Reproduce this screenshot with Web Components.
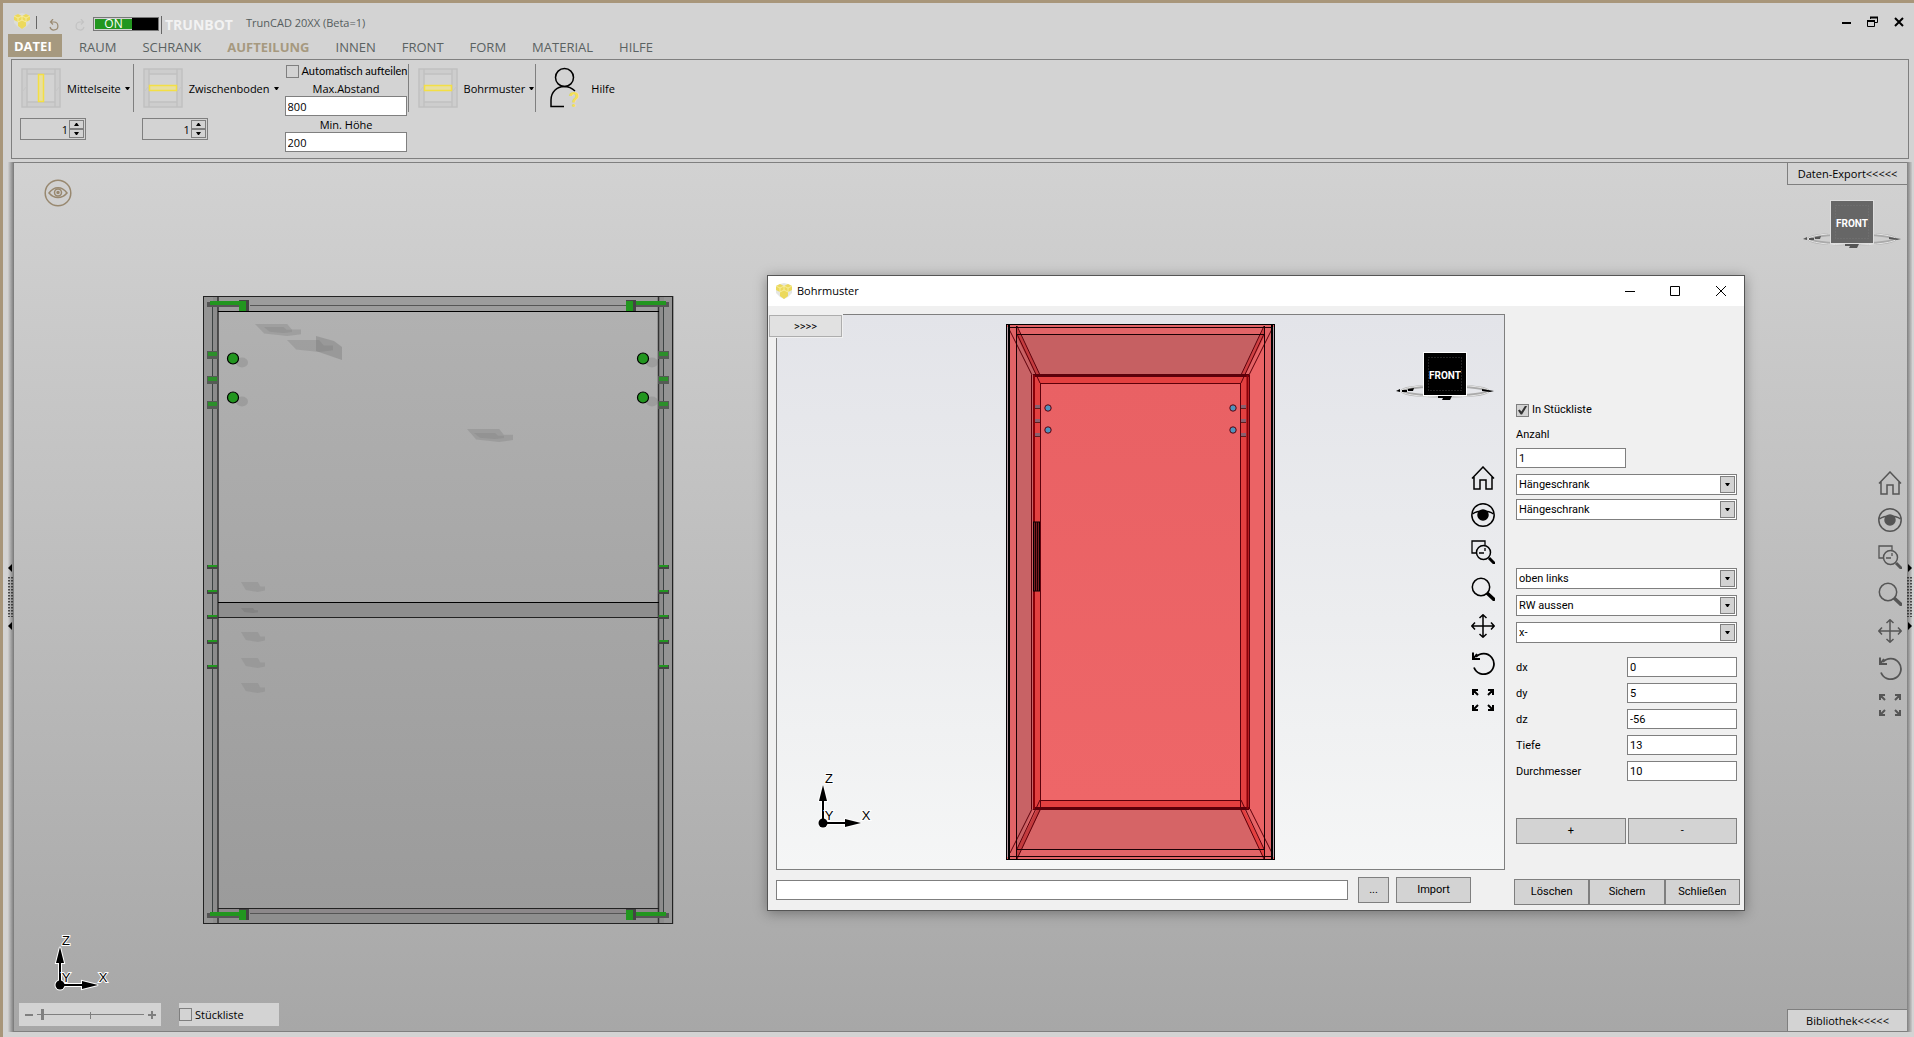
<!DOCTYPE html>
<html lang="de">
<head>
<meta charset="utf-8">
<title>TrunCAD 20XX</title>
<style>
html, body { margin: 0; height: 100%; }
body { font-family: "Open Sans", "Noto Sans", sans-serif; font-size: 11px; color: #000; background: #d3d3d3; overflow: hidden; --line: #7f7f7f; --face: #d3d3d3; }
</style>
</head>
<body>
<tc-app></tc-app>
<script>
const BASE = `*{box-sizing:border-box}button,input,select{font:inherit;color:inherit;margin:0}button{padding:0;border:0;background:none}svg{display:block}`;
function define(name, css, html) {
  customElements.define(name, class extends HTMLElement {
    constructor() {
      super();
      const root = this.attachShadow({ mode: 'open' });
      root.innerHTML = `<style>${BASE}${css}</style>` + (typeof html === 'function' ? html(this) : html);
    }
  });
}

/* ---------- small parts ---------- */
define('tc-logo', `:host{display:block;width:16px;height:16px}`,
  `<svg width="16" height="16" viewBox="0 0 16 16"><path d="M4 1 8 0l4 1 4 2v7l-4 4-4 2-4-2-4-4V3z" fill="#dfe0da" opacity=".8"/><path d="M0 3l4-2 4 2 4-2 4 2v4l-4 2v4l-4 3-4-3V9L0 7z" fill="#ecd95c"/><path d="M0 3l4 2 4-2 4 2 4-2M4 9l4-2 4 2M8 3v4M4 5v4M12 5v4" fill="none" stroke="#fbf3b4" stroke-width=".7"/></svg>`);

define('tc-check', `:host{display:block}label{display:flex;align-items:center;gap:3px;white-space:nowrap;line-height:16px}
input{appearance:none;flex:none;width:13px;height:13px;border:1px solid var(--line);background:var(--face);display:grid;place-items:center}
input:checked::before{content:"";width:9px;height:9px;background:#333;clip-path:polygon(0 55%,18% 45%,38% 68%,80% 0,100% 8%,45% 100%,30% 100%)}`,
  el => `<label><input type="checkbox" ${el.hasAttribute('checked') ? 'checked' : ''}><span><slot></slot></span></label>`);

define('tc-button', `:host{display:block;height:26px}button{width:100%;height:100%;border:1px solid var(--line);background:var(--face);display:block;line-height:16px}`,
  `<button type="button"><slot></slot></button>`);

define('tc-select', `:host{display:grid;height:21px;background:#fff;border:1px solid var(--line)}
select{grid-area:1/1;appearance:none;border:0;background:transparent;width:100%;height:19px;padding:0 20px 0 2px;border-radius:0}
span{grid-area:1/1;justify-self:end;align-self:center;margin-right:1px;width:15px;height:17px;border:1px solid var(--line);background:var(--face);display:grid;place-items:center;pointer-events:none}`,
  el => `<select aria-label="${el.getAttribute('label')}"><option>${el.getAttribute('value')}</option></select><span><svg width="5" height="3"><path d="M0 0h5L3 3H2z"/></svg></span>`);

define('tc-field', `:host{display:block}label{display:flex;align-items:center;justify-content:space-between}
input{width:110px;height:20px;border:1px solid var(--line);background:#fff;padding:0 2px}`,
  el => `<label><span>${el.getAttribute('label')}</span><input type="text" value="${el.getAttribute('value')}"></label>`);

define('tc-cube', `:host{display:block;width:98px;height:48px}text{font:bold 10px "Liberation Sans Narrow",Roboto,sans-serif;fill:#fff}:host([dim]) .c{fill:#666}:host([dim]) .k{fill:#555}:host([dim]) .h{stroke:#dedede}.c,.k{fill:#000}.h{fill:none;stroke:#fff}`,
  `<svg width="98" height="48" viewBox="0 0 98 48"><ellipse cx="49" cy="39" rx="43" ry="5" fill="none" stroke="#aaa" stroke-width="3"/><ellipse cx="49" cy="39" rx="44" ry="6" fill="none" stroke="#e4e4e4" stroke-width="1"/>
<path class="k" d="M0 39l4-2v3zM6 38h5v2H6zM12 37l6-1-1 3h-5zM86 37l6 1 6 1-4 1-8-1zM42 44h14l-2 4h-8l1-2h-5z"/>
<rect class="h" x="27.5" y=".5" width="43" height="43"/><rect class="c" x="28" y="1" width="42" height="42"/>
<path d="M32.500 5.500h33v33h-33z" fill="none" stroke="#888" stroke-dasharray="1 2" opacity=".5"/>
<text x="49" y="27" text-anchor="middle">FRONT</text></svg>`);

define('tc-axis', `:host{display:block;width:80px;height:64px}text{font:13px "Liberation Sans",sans-serif;fill:#000;stroke:#fff;stroke-width:2px;paint-order:stroke;text-anchor:middle}`,
  `<svg width="80" height="64" viewBox="0 0 80 64"><g stroke="#fff" stroke-width="4" fill="#fff"><path d="M15 52V20M15 52h26" fill="none"/></g><g fill="#000" stroke="#fff" stroke-width="2" paint-order="stroke"><path d="M15 14l4 16h-8zM53 52l-16-4v8z"/><circle cx="15" cy="52" r="4.500"/></g><path d="M15 52V22M15 52h26" stroke="#000" stroke-width="2" fill="none"/>
<text x="21" y="12">Z</text><text x="21" y="49">Y</text><text x="58" y="49">X</text></svg>`);

define('tc-nav', `:host{display:flex;flex-direction:column;gap:13px;color:#000}:host([dim]){color:#555}button{width:24px;height:24px}
svg{width:24px;height:24px;fill:none;stroke:currentColor;stroke-width:1.5}`,
  `<button aria-label="Home"><svg viewBox="0 0 24 24"><path d="M1 12.500 12 1l11 11.500M3 11v12h6V14h6v9h6V11"/></svg></button>
<button aria-label="Ansicht"><svg viewBox="0 0 24 24"><circle cx="12" cy="12" r="11.200"/><path d="M1.500 11C7 7 17 7 22.500 11"/><circle cx="12" cy="12" r="5" fill="currentColor"/></svg></button>
<button aria-label="Fenster zoomen"><svg viewBox="0 0 24 24"><path d="M14 5V1H1v12h5M8 13h5M14 8v3" stroke-width="1.300"/><circle cx="12.500" cy="12.500" r="7"/><path d="M18 18l6 6" style="stroke-width:3"/></svg></button>
<button aria-label="Zoom"><svg viewBox="0 0 24 24"><circle cx="10" cy="10" r="8.700"/><path d="M16 16l8 7.500" style="stroke-width:3.500"/></svg></button>
<button aria-label="Verschieben"><svg viewBox="0 0 24 24"><path d="M12 1v22M1 12h22M8.500 4 12 .8 15.500 4M8.500 20l3.500 3.200 3.500-3.200M4 8.500.8 12 4 15.500M20 8.500l3.200 3.500-3.200 3.500"/></svg></button>
<button aria-label="Drehen"><svg viewBox="0 0 24 24"><path d="M3 16.500A10.300 10.300 0 1 0 5 6" stroke-width="1.800"/><path d="M2 1.500V8h7M2 8l4-5" stroke-width="2"/></svg></button>
<button aria-label="Einpassen"><svg viewBox="0 0 24 24" style="stroke-width:2"><path d="M2 7V2h5M2 2l5 5M17 2h5v5M22 2l-5 5M2 17v5h5M2 22l5-5M22 17v5h-5M22 22l-5-5"/></svg></button>`);

/* ---------- title bar and menu ---------- */
define('tc-titlebar', `:host{display:flex;height:31px;padding:10px 10px 0 11px;align-items:flex-start;color:#555d5d}
i{width:1px;background:#666;height:13px;margin:3px 12px 0 6px}.ic{width:10px;height:12px;margin-top:6px;margin-right:16px}
.sw{display:flex;width:66px;height:14px;border:1px solid #777;background:#000;margin:4px 2px 0 -8px;color:#fff;font-size:12px}.sw span{width:38px;background:#22961f;border:1px solid #d3d3d3;border-right:0;line-height:10px}
i.b{height:18px;margin:3px 3px 0 0}strong{color:#f2f2f2;font-size:14px;line-height:18px;margin-top:3px;width:81px}h1{font:inherit;margin:1px 0 0;line-height:18px}
.w{margin-left:auto;display:flex;gap:16px;margin-top:3px}`,
  `<tc-logo></tc-logo><i></i>
<button class="ic" aria-label="Rückgängig"><svg width="10" height="12" fill="none" stroke="#9a8a72" stroke-width="1.200"><path d="M2 3h3a4 4 0 1 1-4 5M4 0 1.500 3 4 5.500"/></svg></button>
<button class="ic" aria-label="Wiederholen"><svg width="10" height="12" fill="none" stroke="#c3c3c3" stroke-width="1.200"><path d="M8 3H5a4 4 0 1 0 4 5M6 0l2.500 3L6 5.500"/></svg></button>
<button class="sw" role="switch" aria-checked="true"><span>ON</span></button><i class="b"></i><strong>TRUNBOT</strong><h1>TrunCAD 20XX (Beta=1)</h1>
<div class="w"><button aria-label="Minimieren"><svg width="10" height="10"><path d="M1 5h9v2H1z"/></svg></button><button aria-label="Wiederherstellen"><svg width="11" height="12" fill="none" stroke="#000" stroke-width="1"><path d="M3.500 3V1.500h7v5H8" /><path d="M3 1.500h8M0 5h8" stroke-width="2"/><path d="M.5 5v5.500h7V5"/></svg></button><button aria-label="Schließen"><svg width="10" height="10" stroke="#000" stroke-width="2"><path d="M1 1l8 8M9 1 1 9"/></svg></button></div>`);

define('tc-menu', `:host{display:flex;height:23px;padding-left:5px;font-size:13px;color:#5a6262}
nav{display:flex;align-items:center;gap:26px}button{height:23px;line-height:18px;padding-top:2px}.d{background:#a6997f;color:#fff;font-weight:700;width:54px;margin-right:-9px;text-align:left;padding:0 0 0 6px}.a{color:#a6997f;font-weight:700}`,
  `<nav><button class="d">DATEI</button><button>RAUM</button><button>SCHRANK</button><button class="a">AUFTEILUNG</button><button>INNEN</button><button>FRONT</button><button>FORM</button><button>MATERIAL</button><button>HILFE</button></nav>`);

/* ---------- ribbon ---------- */
const frame = bar => `<svg width="40" height="40" viewBox="0 0 40 40"><g fill="#cdcdcd" stroke="#c1c1c1" stroke-width="1.500"><path d="M1 1h5v38H1zM34 1h5v38h-5zM6 1h28v5H6zM6 34h28v5H6z"/></g><path d="M1 24 6 18M34 24l5-6" stroke="#c6c6c6"/><rect ${bar} fill="#e8dfa0" stroke="#f3df45" stroke-width="1.500"/></svg>`;
define('tc-tool', `:host{display:flex;flex-direction:column;align-items:flex-start;gap:10px}.t{display:flex;align-items:center;height:40px}.t span{margin:2px 4px 0 6px;line-height:16px}
.s{display:flex;width:66px;height:22px;border:1px solid var(--line);margin-left:-1px;align-items:center}.s input{flex:1;min-width:0;border:0;background:none;text-align:right;padding:0 1px 0 0;height:20px}.s div{width:15px;margin-right:1px;display:grid;gap:0}.s button{height:9px;width:15px;border:1px solid var(--line);display:grid;place-items:center}`,
  el => `<button class="t">${el.hasAttribute('v') ? frame('x="17.500" y="6.500" width="5" height="27"') : frame('x="6.500" y="17.500" width="27" height="5"')}<span><slot></slot></span><svg width="5" height="3"><path d="M0 0h5L3 3H2z"/></svg></button>` +
  (el.hasAttribute('count') ? `<div class="s"><input value="1" aria-label="Anzahl"><div><button aria-label="mehr"><svg width="5" height="3"><path d="M0 3h5L3 0H2z"/></svg></button><button aria-label="weniger"><svg width="5" height="3"><path d="M0 0h5L3 3H2z"/></svg></button></div></div>` : ''));

define('tc-ribbon', `:host{display:flex;height:100px;margin:2px 5px 0 8px;border:1px solid var(--line);padding:4px 0 0 9px;align-items:flex-start}
tc-tool{margin-top:4px}.sep{width:1px;height:48px;background:var(--line);margin:0 9px 0 3px}.sep.m{margin-left:1px}.f{width:123px;margin-left:6px;height:90px}.f label{display:grid;line-height:14px;text-align:center}.f input{width:122px;height:20px;margin-bottom:1px;border:1px solid var(--line);background:#fff;padding:0 2px}
.f tc-check{margin:-1px 0 3px 1px;font-family:Lato,Roboto,sans-serif}.f label+label{margin-top:1px}.sep.n{margin-left:0}.h{display:flex;align-items:center;gap:11px;margin:4px 0 0 5px}.h svg{overflow:visible}.h span{line-height:16px;margin-top:2px}.h text{font:bold 21px Roboto,sans-serif;fill:#f3df5a}`,
  `<tc-tool v count>Mittelseite</tc-tool><div class="sep"></div><tc-tool count>Zwischenboden</tc-tool>
<div class="f"><tc-check>Automatisch aufteilen</tc-check><label>Max.Abstand<input value="800"></label><label>Min. Höhe<input value="200"></label></div><div class="sep n"></div>
<tc-tool>Bohrmuster</tc-tool><div class="sep m"></div>
<button class="h"><svg width="30" height="40" viewBox="0 0 30 40"><g fill="none" stroke="#000" stroke-width="1.500"><circle cx="14.500" cy="9.500" r="9"/><path d="M14 38.500H1V32c0-8 6-13.500 13-13.500 4 0 8 1.500 11 4.500"/></g><text x="19" y="39">?</text></svg><span>Hilfe</span></button>`);

/* ---------- drawings ---------- */
const R = (x, y, w, h, f) => `<rect x="${x}" y="${y}" width="${w}" height="${h}" fill="${f}"/>`;
function cabinet() {
  const G = '#22961f', D = '#555';
  let s = R(203, 296, 471, 628, '#949494') + R(218, 297, 441, 14, '#9c9c9c') + R(213, 297, 5, 626, '#8c8c8c') + R(659, 297, 5, 626, '#8c8c8c')
    + R(218, 311, 441, 598, 'url(#g)') + R(218, 602, 441, 15, '#8e8e8e') + R(218, 908, 441, 5, '#8c888a') + R(218, 913, 441, 10, '#8e8e8e');
  const smudge = (x, y, w, h, o) => `<path d="M${x} ${y}h${w * .7}l${w * .1} ${h * .45}h${w * .2}v${h * .4}l-${w * .3} ${h * .15}-${w * .5}-${h * .2}z" fill="#777" opacity="${o}"/>`;
  s += smudge(255, 324, 46, 12, .3) + smudge(264, 327, 28, 6, .25) + smudge(287, 340, 46, 12, .3) + `<path d="M316 336l18 5 8 6v13l-26-9z" fill="#777" opacity=".4"/>`
    + smudge(467, 429, 46, 13, .3) + smudge(474, 433, 30, 6, .25) + [582, 632, 658, 683].map(y => smudge(241, y, 24, 10, .25)).join('') + smudge(241, 608, 17, 5, .5);
  s += `<g fill="none" stroke="#333"><path d="M212.500 305v608M663.500 305v608" stroke="#3c4242"/><path d="M250 305.500h377M250 913.500h377" stroke="#555"/><path d="M218 297v626M658.500 297v626" stroke-width="1.500"/><path d="M218 311.500h441M218 602.500h441" stroke="#000"/><path d="M218 617.500h441M218 908.500h441" stroke="#222"/><rect x="203.500" y="296.500" width="469" height="627" stroke="#222"/></g>`;
  [300, 909].forEach(y => {
    const a = y === 300 ? 301 : 912;
    s += R(207, a + 1, 35, 5, D) + R(210, a, 32, 4, G) + R(239, y, 10, 11, '#444') + R(239, y + 1, 7, 10, G)
      + R(634, a + 1, 35, 5, D) + R(636, a, 30, 4, G) + R(626, y, 10, 11, '#444') + R(626, y + 1, 7, 10, G);
  });
  [207, 658].forEach(x => {
    [351, 376, 401].forEach(y => s += R(x, y, 11, 8, '#555b55') + R(x + 1, y + 1, 9, 4, '#2c8f2a'));
    [565, 590, 615, 640, 665].forEach(y => s += R(x, y, 11, 4, '#444') + R(x + 1, y, 9, 2, G));
  });
  [233, 643].forEach(x => [358.5, 397.5].forEach(y => s += `<ellipse cx="${x + 9}" cy="${y + 4}" rx="6" ry="5" fill="#777" opacity=".3"/><circle cx="${x}" cy="${y}" r="5.500" fill="${G}" stroke="#000" stroke-width="1.200"/>`));
  return s;
}
define('tc-cabinet', `:host{display:block;width:480px;height:640px}`,
  `<svg width="480" height="640" viewBox="200 290 480 640"><defs><linearGradient id="g" x1="0" y1="0" x2="0" y2="1"><stop offset="0" stop-color="#b1b1b1"/><stop offset="1" stop-color="#9b9b9b"/></linearGradient></defs>${cabinet()}</svg>`);

function redCabinet() {
  const P = (d, f) => `<path d="${d}" fill="${f}"/>`;
  let s = P('M1006 324h269v536h-269z', '#e26467') + P('M1017 334h248l-24 41h-209z', '#c66062') + P('M1017 334l16 41v434l-16 41z', '#c86265')
    + P('M1017 850l24-41h200l24 41z', '#d66466') + P('M1265 334l-16 41v434l16 41z', '#eb6365') + P('M1033 375h216v434h-216z', '#e34040') + P('M1041 384h199v416h-199z', 'url(#r)')
    + P('M1017 327v10l20 40h4z', '#c33b3e') + P('M1264 327v10l-20 40h-4z', '#cf4043') + P('M1017 859v-10l20-40h4z', '#c33b3e') + P('M1264 859v-10l-20-40h-4z', '#e34040');
  s += `<g fill="none" stroke="#5c000a"><path d="M1033 375.500h216" stroke-width="3"/><path d="M1033 808.500h216" stroke-width="3"/><path d="M1034 375v434M1247.500 375v434" stroke-width="2" stroke="#8a0008"/><path d="M1031.500 375v434M1249.500 375v434M1040.500 384v426M1240.500 384v426M1040 383.500h201M1040 800.500h201"/>
<path d="M1009 329l23 46M1017 334l23 49M1017 326l23 49M1272 329l-23 46M1264 334l-23 49M1264 326l-23 49M1010 853l22-44M1017 859l23-49M1017 849l23-49M1272 853l-22-44M1264 859l-23-49M1264 849l-23-49"/></g>
<g fill="none" stroke="#1c0004"><path d="M1016.500 326v533M1264.500 326v533M1017 334.500h248M1017 849.500h248M1009 327.500h264M1009 856.500h264"/></g>
<g fill="none" stroke="#000"><rect x="1006.500" y="324.500" width="268" height="535"/><path d="M1009 325v534M1272 325v534" stroke-width="2"/><path d="M1007.500 327v530M1273.500 327v530" stroke="#b9a0a8"/></g>
<g stroke="#000"><rect x="1033.500" y="522" width="6" height="69" fill="#7a1d20"/><path d="M1035.500 522v69M1037.500 522v69" stroke="#1c0004"/></g>`;
  [1048, 1233].forEach(x => [408, 430].forEach(y => s += `<circle cx="${x}" cy="${y}" r="3.200" fill="#4f93bd" stroke="#5c000a"/>`));
  [1035, 1241].forEach(x => [405, 419, 433].forEach(y => s += R(x, y, 5, 3, '#8a6070') + R(x, y + 3, 5, 1, '#5c2020')));
  return s;
}
define('tc-red-cabinet', `:host{display:block;width:270px;height:537px}`,
  `<svg width="270" height="537" viewBox="1006 324 270 537"><defs><linearGradient id="r" x1="0" y1="0" x2="0" y2="1"><stop offset="0" stop-color="#e96164"/><stop offset="1" stop-color="#ee6668"/></linearGradient></defs>${redCabinet()}</svg>`);

/* ---------- dialog ---------- */
define('tc-dialog', `:host{display:flex;flex-direction:column;border:1px solid #555;background:#f0f0f0;box-shadow:0 2px 12px rgba(0,0,0,.35)}
header{display:flex;align-items:center;height:30px;background:#fff;padding:0 17px 0 8px}h2{font:inherit;margin:0 0 0 5px;line-height:16px}.w{margin-left:auto;display:flex;gap:35px}
.body{flex:1;min-height:0;display:flex;gap:9px;padding:8px 4px 5px 8px;font-family:Roboto,"Liberation Sans",sans-serif}
.left{flex:1;display:flex;flex-direction:column;position:relative;gap:7px;padding-bottom:2px}
.canvas{flex:1;border:1px solid var(--line);background:linear-gradient(#e3e4e9,#ecedef 55%,#f0f1f2 75%,#f5f6f6);position:relative;display:flex;flex-direction:column;align-items:flex-end}
tc-cube{margin:37px 10px 66px 0}tc-nav{margin-right:9px}tc-red-cabinet{position:absolute;left:229px;top:9px}tc-axis{position:absolute;left:31px;bottom:34px}
.more{position:absolute;left:-8px;top:0;width:75px;height:24px;border:1px solid #f0f0f0;background:#f0f0f0;}
.more button{width:73px;height:22px;border:1px solid #adadad;background:#e1e1e1;display:block}
footer{display:flex;align-items:center;padding-right:34px}footer input{flex:1;height:20px;border:1px solid var(--line);background:#fff;margin-right:10px}.dots{width:31px;margin-right:7px}.imp{width:75px}
.right{width:226px;display:flex;flex-direction:column}.form{padding:88px 3px 0 2px;display:flex;flex-direction:column}
.one{display:grid;gap:5px;line-height:16px;margin:9px 0 6px}.one input{width:110px;height:20px;border:1px solid var(--line);background:#fff;padding:0 2px}
.two,.three,.five{display:grid;gap:4px}.three{gap:6px;margin:48px 0 14px}.five{gap:6px}.pm{display:grid;grid-template-columns:1fr 1fr;gap:2px;margin-top:37px}.end{display:grid;grid-template-columns:1fr 1fr 1fr;margin-top:auto}`,
  `<header><tc-logo></tc-logo><h2>Bohrmuster</h2><div class="w"><button aria-label="Minimieren"><svg width="10" height="11"><path d="M0 5h10v1H0z"/></svg></button><button aria-label="Maximieren"><svg width="11" height="11" fill="none" stroke="#000"><path d="M.5.5h9v9h-9z"/></svg></button><button aria-label="Schließen"><svg width="11" height="11" stroke="#000"><path d="M0 0l10 10M10 0 0 10"/></svg></button></div></header>
<div class="body"><div class="left"><div class="canvas"><tc-red-cabinet></tc-red-cabinet><tc-cube></tc-cube><tc-nav></tc-nav><tc-axis></tc-axis></div>
<div class="more"><button>&gt;&gt;&gt;&gt;</button></div>
<footer><input aria-label="Datei"><tc-button class="dots">...</tc-button><tc-button class="imp">Import</tc-button></footer></div>
<div class="right"><div class="form"><tc-check checked>In Stückliste</tc-check><label class="one">Anzahl<input value="1"></label>
<div class="two"><tc-select label="Typ" value="Hängeschrank"></tc-select><tc-select label="Variante" value="Hängeschrank"></tc-select></div>
<div class="three"><tc-select label="Bezug" value="oben links"></tc-select><tc-select label="Fläche" value="RW aussen"></tc-select><tc-select label="Richtung" value="x-"></tc-select></div>
<div class="five"><tc-field label="dx" value="0"></tc-field><tc-field label="dy" value="5"></tc-field><tc-field label="dz" value="-56"></tc-field><tc-field label="Tiefe" value="13"></tc-field><tc-field label="Durchmesser" value="10"></tc-field></div>
<div class="pm"><tc-button>+</tc-button><tc-button>-</tc-button></div></div>
<div class="end"><tc-button>Löschen</tc-button><tc-button>Sichern</tc-button><tc-button>Schließen</tc-button></div></div></div>`);

/* ---------- stage ---------- */
define('tc-splitter', `:host{width:5px;background:linear-gradient(90deg,#7f7f7f,#c8c8c8);display:flex;align-items:center}:host([left]){width:6px;background:linear-gradient(90deg,#cfcfcf,#777)}svg{overflow:visible}`,
  el => `<svg width="4" height="66" viewBox="0 0 4 66">${el.hasAttribute('left') ? '<path d="M4 0v8L0 4zM4 58v8l-4-4z"/>' : '<path d="M1 0v8l4-4zM1 58v8l4-4z"/>'}<path d="M1 13v40M4 13v40" stroke="#222" stroke-width="1.500" stroke-dasharray="1.500 1.500"/></svg>`);

define('tc-viewport', `:host{flex:1;min-width:0;position:relative;display:flex;justify-content:space-between;border:solid var(--line);border-width:1px 0;background:linear-gradient(#d2d2d2,#a7a7a7)}
.l,.r{display:flex;flex-direction:column}.l{justify-content:space-between;padding:16px 0 5px 5px}.eye{width:28px;height:28px;margin-left:25px}
tc-axis{margin:0 0 6px 26px}.bar{display:flex;gap:18px}.z{display:flex;align-items:center;width:142px;height:23px;background:var(--face);padding:0 5px 0 6px;gap:4px}.z input{appearance:none;flex:1;min-width:0;height:12px;margin:0;background:linear-gradient(var(--line),var(--line)) 0 5px/100% 1px no-repeat,linear-gradient(var(--line),var(--line)) 50% 3px/1px 7px no-repeat}.z input::-webkit-slider-thumb{appearance:none;width:3px;height:11px;background:var(--line)}
.c{width:100px;height:23px;background:var(--face);display:flex;align-items:center}
.r{align-items:flex-end}.tab{width:120px;height:22px;background:var(--face);border:solid var(--line);border-width:0 0 1px 1px;line-height:20px}.bib{margin-top:auto;border-width:1px 0 0 1px}tc-cube{margin:15px 6px 223px 0}tc-nav{margin-right:5px}
tc-cabinet{position:absolute;left:186px;top:127px}tc-dialog{position:absolute;left:753px;top:112px;width:978px;height:636px}`,
  `<tc-cabinet></tc-cabinet>
<div class="l"><button class="eye" aria-label="Sichtbarkeit"><svg width="28" height="28" fill="none" stroke="#98886f" stroke-width="1.500"><circle cx="14" cy="14" r="12.800"/><path d="M5 14c5-7 13-7 18 0-5 6-13 6-18 0z"/><circle cx="14" cy="13.500" r="3.500"/><circle cx="14" cy="13.500" r="1" fill="#98886f"/></svg></button>
<div><tc-axis></tc-axis><div class="bar"><div class="z"><button aria-label="kleiner"><svg width="8" height="8"><path d="M0 3h8v2H0z" fill="#7f7f7f"/></svg></button><input type="range" value="4" aria-label="Zoom"><button aria-label="größer"><svg width="8" height="8"><path d="M0 3h3V0h2v3h3v2H5v3H3V5H0z" fill="#7f7f7f"/></svg></button></div><div class="c"><tc-check>Stückliste</tc-check></div></div></div></div>
<div class="r"><button class="tab">Daten-Export&lt;&lt;&lt;&lt;&lt;</button><tc-cube dim></tc-cube><tc-nav dim></tc-nav><button class="tab bib">Bibliothek&lt;&lt;&lt;&lt;&lt;</button></div>
<tc-dialog role="dialog" aria-label="Bohrmuster"></tc-dialog>`);

define('tc-app', `:host{box-sizing:border-box;display:flex;flex-direction:column;height:100vh;border:solid #a8967a;border-width:3px 0 0 3px;background:var(--face)}
main{flex:1;min-height:0;display:flex;margin:3px 2px 5px 5px}`,
  `<tc-titlebar></tc-titlebar><tc-menu></tc-menu><tc-ribbon></tc-ribbon><main><tc-splitter left></tc-splitter><tc-viewport></tc-viewport><tc-splitter></tc-splitter></main>`);
</script>
</body>
</html>
